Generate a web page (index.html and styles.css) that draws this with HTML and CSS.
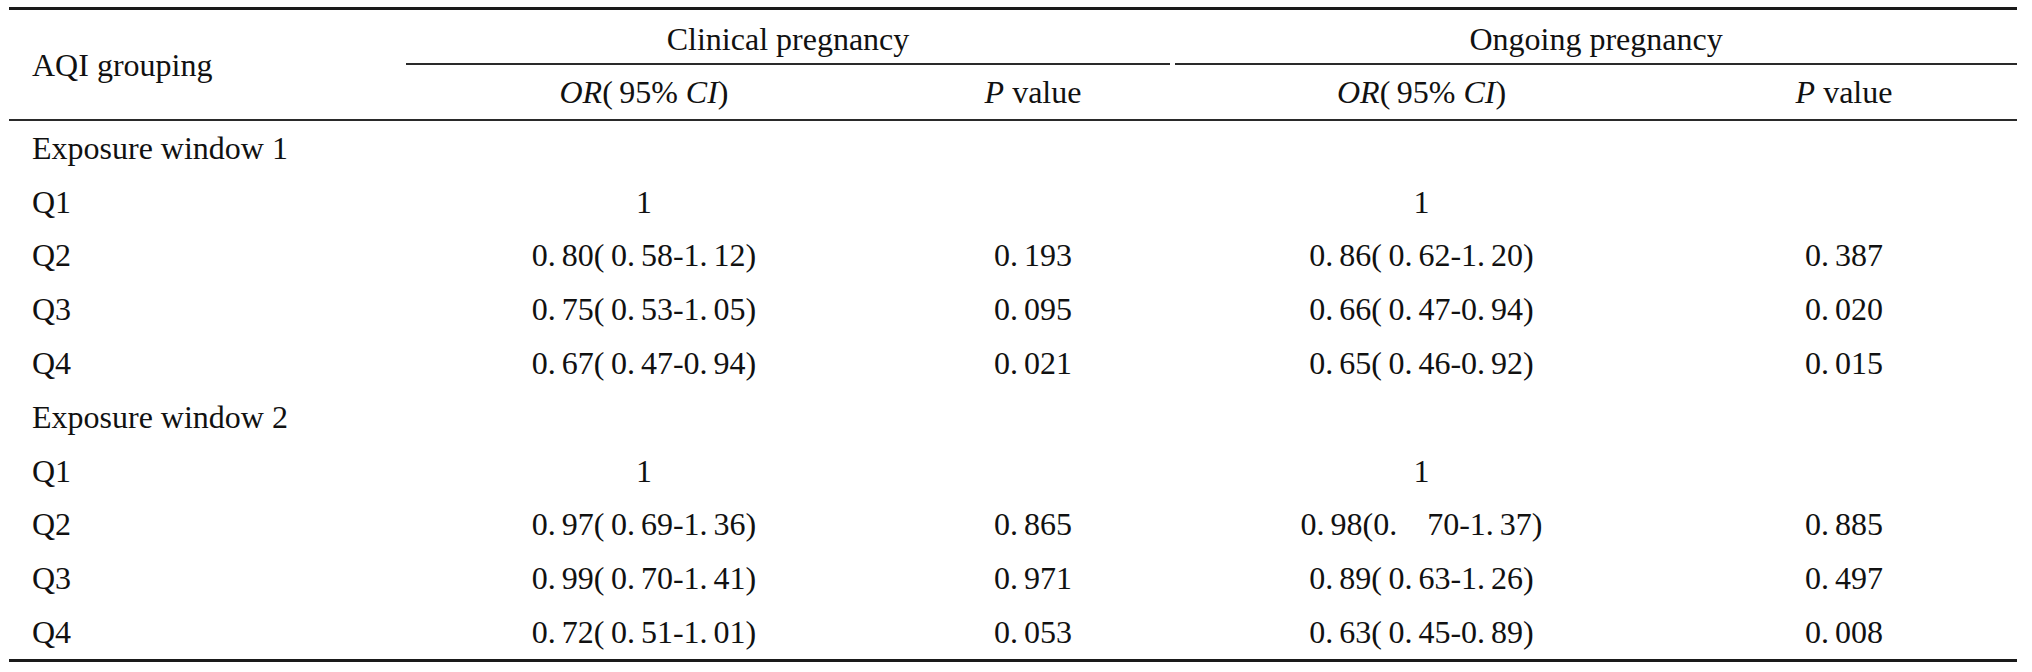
FILE: index.html
```html
<!DOCTYPE html>
<html lang="en">
<head>
<meta charset="utf-8">
<title>AQI grouping table</title>
<link rel="stylesheet" href="styles.css">
</head>
<body>
<table class="tbl">
  <colgroup>
    <col class="c0"><col class="c1"><col class="c2"><col class="c3"><col class="c4">
  </colgroup>
  <thead>
    <tr class="hr1">
      <th rowspan="2" class="lab">AQI grouping</th>
      <th colspan="2" class="spn"><div class="spn-in spn-l">Clinical pregnancy</div></th>
      <th colspan="2" class="spn"><div class="spn-in spn-r">Ongoing pregnancy</div></th>
    </tr>
    <tr class="hr2">
      <th class="or1"><i>OR</i>(&#8201;95% <i>CI</i>)</th>
      <th><i>P</i> value</th>
      <th><i>OR</i>(&#8201;95% <i>CI</i>)</th>
      <th><i>P</i> value</th>
    </tr>
  </thead>
  <tbody>
    <tr><td class="lab">Exposure window 1</td><td class="or1"></td><td></td><td></td><td></td></tr>
    <tr><td class="lab">Q1</td><td class="num or1">1</td><td></td><td class="num">1</td><td></td></tr>
    <tr><td class="lab">Q2</td><td class="num or1">0. 80(&#8201;0. 58-1. 12)</td><td class="num">0. 193</td><td class="num">0. 86(&#8201;0. 62-1. 20)</td><td class="num">0. 387</td></tr>
    <tr><td class="lab">Q3</td><td class="num or1">0. 75(&#8201;0. 53-1. 05)</td><td class="num">0. 095</td><td class="num">0. 66(&#8201;0. 47-0. 94)</td><td class="num">0. 020</td></tr>
    <tr><td class="lab">Q4</td><td class="num or1">0. 67(&#8201;0. 47-0. 94)</td><td class="num">0. 021</td><td class="num">0. 65(&#8201;0. 46-0. 92)</td><td class="num">0. 015</td></tr>
    <tr><td class="lab">Exposure window 2</td><td class="or1"></td><td></td><td></td><td></td></tr>
    <tr><td class="lab">Q1</td><td class="num or1">1</td><td></td><td class="num">1</td><td></td></tr>
    <tr><td class="lab">Q2</td><td class="num or1">0. 97(&#8201;0. 69-1. 36)</td><td class="num">0. 865</td><td class="num">0. 98(0.&nbsp;&nbsp;&nbsp;&nbsp; 70-1. 37)</td><td class="num">0. 885</td></tr>
    <tr><td class="lab">Q3</td><td class="num or1">0. 99(&#8201;0. 70-1. 41)</td><td class="num">0. 971</td><td class="num">0. 89(&#8201;0. 63-1. 26)</td><td class="num">0. 497</td></tr>
    <tr><td class="lab">Q4</td><td class="num or1">0. 72(&#8201;0. 51-1. 01)</td><td class="num">0. 053</td><td class="num">0. 63(&#8201;0. 45-0. 89)</td><td class="num">0. 008</td></tr>
  </tbody>
</table>
</body>
</html>
```

FILE: styles.css
```css
html, body {
  margin: 0;
  padding: 0;
  background: #ffffff;
}

body {
  padding: 7px 0 0 9px;
  font-family: "Liberation Serif", "Times New Roman", serif;
  font-size: 32px;
  color: #111111;
}

.tbl {
  width: 2008px;
  table-layout: fixed;
  border-collapse: separate;
  border-spacing: 0;
  border-top: 3px solid #1a1a1a;
  border-bottom: 3px solid #1a1a1a;
}

.c0 { width: 397px; }
.c1 { width: 488px; }
.c2 { width: 278px; }
.c3 { width: 499px; }
.c4 { width: 346px; }

.tbl th,
.tbl td {
  padding: 0;
  font-weight: normal;
  text-align: center;
  vertical-align: middle;
  white-space: pre;
  line-height: 1;
}

.tbl .lab {
  text-align: left;
  padding-left: 23px;
}

.hr1 .spn {
  height: 55px;
}

.spn-in {
  height: 55px;
  box-sizing: border-box;
  padding-top: 4px;
  border-bottom: 2px solid #2a2a2a;
  display: flex;
  align-items: center;
  justify-content: center;
}

.spn-l { margin-right: 2px; }
.spn-r { margin-left: 3px; }

.hr2 th {
  height: 54px;
  border-bottom: 2px solid #2a2a2a;
}

thead .lab {
  border-bottom: 2px solid #2a2a2a;
}

tbody td {
  height: 53.8px;
  box-sizing: border-box;
  padding-bottom: 4px;
}

.tbl .or1 {
  padding-right: 12px;
}

.tbl .num {
  word-spacing: -2px;
}
```
